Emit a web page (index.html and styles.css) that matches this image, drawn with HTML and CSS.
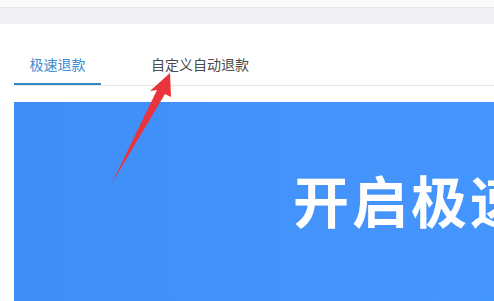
FILE: index.html
```html
<!DOCTYPE html>
<html lang="zh">
<head>
<meta charset="utf-8">
<link rel="stylesheet" href="styles.css">
</head>
<body>
<div class="topstrip"></div>
<div class="grayband"></div>
<div class="main">
  <div class="tabs">
    <div class="tab active">极速退款</div>
    <div class="tab">自定义自动退款</div>
  </div>
  <div class="banner">
    <div class="banner-title">开启极速退款</div>
  </div>
</div>
<svg class="arrow" width="494" height="301" viewBox="0 0 494 301">
  <polygon points="170,73 150,91 157,90 112,183 165,94 171,97" fill="#e9343b"/>
</svg>
</body>
</html>
```
FILE: styles.css
```css
html, body {
  margin: 0;
  padding: 0;
  background: #ffffff;
  overflow: hidden;
  width: 494px;
  height: 301px;
  font-family: "Noto Sans CJK SC", "Microsoft YaHei", sans-serif;
}
.topstrip {
  height: 7px;
  background: #fbfbfc;
  border-bottom: 1px solid #e6e6e9;
}
.grayband {
  height: 16px;
  background: #f0f0f3;
}
.main {
  padding-left: 14px;
  padding-top: 27px;
}
.tabs {
  display: flex;
  gap: 34px;
  border-bottom: 1px solid #e6e6e6;
  height: 34px;
}
.tab {
  font-size: 14px;
  line-height: 20px;
  color: #4a4a4a;
  padding: 3px 16px 0;
  height: 30px;
  box-sizing: border-box;
}
.tab.active {
  color: #3a8bd1;
  border-bottom: 2px solid #2f89c8;
  height: 34px;
  width: 87px;
  text-align: center;
  padding: 3px 0 0;
}
.banner {
  margin-top: 16px;
  height: 199px;
  background: linear-gradient(90deg, #3f8ef8 0%, #4393fb 60%, #4595fe 100%);
  display: flex;
  white-space: nowrap;
  overflow: hidden;
}
.banner-title {
  margin-left: 279px;
  margin-top: 65px;
  font-size: 56px;
  line-height: 64px;
  font-weight: 600;
  color: #ffffff;
  letter-spacing: 3px;
}
.arrow {
  position: absolute;
  left: 0;
  top: 0;
  pointer-events: none;
}
```
